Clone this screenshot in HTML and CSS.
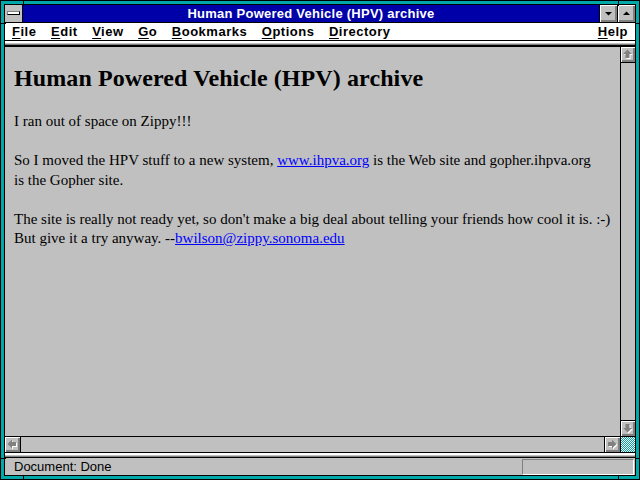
FILE: index.html
```html
<!DOCTYPE html>
<html>
<head>
<meta charset="utf-8">
<title>Human Powered Vehicle (HPV) archive</title>
<link rel="stylesheet" href="styles.css">
</head>
<body>
<div class="window">
  <div class="frame">
    <div class="titlebar">
      <div class="sysmenu"><span class="sysbar"></span></div>
      <div class="title">Human Powered Vehicle (HPV) archive</div>
      <div class="tbtn"><svg width="17" height="17" viewBox="0 0 17 17"><polygon points="5,7 12,7 8.5,10.5" fill="#000"/></svg></div>
      <div class="tbtn"><svg width="17" height="17" viewBox="0 0 17 17"><polygon points="5,10 12,10 8.5,6.5" fill="#000"/></svg></div>
    </div>
    <div class="menubar">
      <span class="mi"><u>F</u>ile</span>
      <span class="mi"><u>E</u>dit</span>
      <span class="mi"><u>V</u>iew</span>
      <span class="mi"><u>G</u>o</span>
      <span class="mi"><u>B</u>ookmarks</span>
      <span class="mi"><u>O</u>ptions</span>
      <span class="mi"><u>D</u>irectory</span>
      <span class="mi help"><u>H</u>elp</span>
    </div>
    <div class="toolstrip"></div>
    <div class="viewport">
      <div class="content">
        <h1>Human Powered Vehicle (HPV) archive</h1>
        <p>I ran out of space on Zippy!!!</p>
        <p>So I moved the HPV stuff to a new system, <a href="#">www.ihpva.org</a> is the Web site and gopher.ihpva.org<br>is the Gopher site.</p>
        <p>The site is really not ready yet, so don't make a big deal about telling your friends how cool it is. :-) But give it a try anyway. --<a href="#">bwilson@zippy.sonoma.edu</a></p>
      </div>
      <div class="vscroll">
        <div class="sbtn up"><svg width="14" height="15" viewBox="0 0 14 15"><g transform="translate(1,1)"><polygon points="6.5,2.5 2,7 4.5,7 4.5,11 8.5,11 8.5,7 11,7" fill="#fff"/></g><polygon points="6.5,2.5 2,7 4.5,7 4.5,11 8.5,11 8.5,7 11,7" fill="#808080"/></svg></div>
        <div class="track"></div>
        <div class="sbtn down"><svg width="14" height="15" viewBox="0 0 14 15"><g transform="translate(1,1)"><polygon points="6.5,11.5 2,7 4.5,7 4.5,3 8.5,3 8.5,7 11,7" fill="#fff"/></g><polygon points="6.5,11.5 2,7 4.5,7 4.5,3 8.5,3 8.5,7 11,7" fill="#808080"/></svg></div>
      </div>
    </div>
    <div class="hscroll">
      <div class="sbtn left"><svg width="15" height="15" viewBox="0 0 15 15"><g transform="translate(1,1)"><polygon points="2.5,7 7,2.5 7,5 11,5 11,9 7,9 7,11.5" fill="#fff"/></g><polygon points="2.5,7 7,2.5 7,5 11,5 11,9 7,9 7,11.5" fill="#808080"/></svg></div>
      <div class="htrack"></div>
      <div class="sbtn right"><svg width="15" height="15" viewBox="0 0 15 15"><g transform="translate(1,1)"><polygon points="11.5,7 7,2.5 7,5 3,5 3,9 7,9 7,11.5" fill="#fff"/></g><polygon points="11.5,7 7,2.5 7,5 3,5 3,9 7,9 7,11.5" fill="#808080"/></svg></div>
      <div class="corner"></div>
    </div>
    <div class="sep"></div>
    <div class="status">
      <span class="stext">Document: Done</span>
      <div class="progress"></div>
    </div>
  </div>
  <span class="mark v" style="left:22px;top:0"></span>
  <span class="mark v" style="left:617px;top:0"></span>
  <span class="mark v" style="left:22px;top:475px"></span>
  <span class="mark v" style="left:617px;top:475px"></span>
  <span class="mark h" style="left:0;top:22px"></span>
  <span class="mark h" style="left:635px;top:22px"></span>
  <span class="mark h" style="left:0;top:457px"></span>
  <span class="mark h" style="left:635px;top:457px"></span>
</div>
</body>
</html>
```
FILE: styles.css
```css
* { box-sizing: border-box; }
html, body { margin: 0; padding: 0; }
body { width: 640px; height: 480px; overflow: hidden; background: #c0c0c0; }

.window {
  position: relative;
  width: 640px;
  height: 480px;
  border: 1px solid #000;
  background: #00a8a8;
  padding: 3px;
}
.frame {
  width: 632px;
  height: 472px;
  border: 1px solid #000;
  display: flex;
  flex-direction: column;
  background: #c0c0c0;
}
.mark { position: absolute; background: #000; }
.mark.v { width: 1px; height: 5px; }
.mark.h { width: 5px; height: 1px; }

/* title bar */
.titlebar {
  height: 18px;
  display: flex;
  border-bottom: 1px solid #000;
  flex: none;
}
.sysmenu {
  width: 18px;
  height: 17px;
  background: #c0c0c0;
  border-right: 1px solid #000;
  position: relative;
}
.sysbar {
  position: absolute;
  left: 2px;
  top: 6px;
  width: 13px;
  height: 4px;
  background: #fff;
  border: 1px solid #808080;
  border-bottom-color: #000;
  border-right-color: #000;
}
.title {
  flex: 1;
  background: #0000a8;
  color: #fff;
  font: bold 13px/17px "Liberation Sans", Arial, sans-serif;
  letter-spacing: 0.25px;
  text-align: center;
}
.tbtn {
  width: 18px;
  height: 17px;
  border-left: 1px solid #000;
  background: #c0c0c0;
  box-shadow: inset 1px 1px 0 #fff, inset -2px -2px 0 #808080;
  display: flex;
}

/* menu */
.menubar {
  height: 18px;
  background: #fff;
  border-bottom: 1px solid #000;
  display: flex;
  flex: none;
  font: bold 13px/17px "Liberation Sans", Arial, sans-serif;
  letter-spacing: 0.5px;
  color: #000;
}
.mi { padding: 0 7.3px; }
.mi:first-child { padding-left: 7px; }
.mi u { text-underline-offset: 2px; }
.help { margin-left: auto; padding-right: 7px; }

.toolstrip {
  height: 6px;
  flex: none;
  border-top: 2px solid #fff;
  border-bottom: 2px solid #000;
  background: linear-gradient(#c0c0c0 0 1px, #808080 1px 2px);
}

/* viewport */
.viewport {
  height: 389px;
  display: flex;
  flex: none;
}
.content {
  flex: 1;
  padding: 17px 9px 0 9px;
  font: 15px/19.5px "Liberation Serif", "Times New Roman", serif;
  color: #000;
}
.content h1 {
  font: bold 24px/28px "Liberation Serif", "Times New Roman", serif;
  letter-spacing: 0.1px;
  margin: 0 0 20px;
}
.content p { margin: 0 0 19.5px; }
.content a { color: #0000ff; text-decoration: underline; }

.vscroll {
  width: 15px;
  border-left: 1px solid #000;
  display: flex;
  flex-direction: column;
}
.sbtn {
  background: #c0c0c0;
  box-shadow: inset 1px 1px 0 #fff, inset -2px -2px 0 #808080;
  display: flex;
  flex: none;
}
.vscroll .sbtn { height: 16px; }
.vscroll .up { border-bottom: 1px solid #000; }
.vscroll .down { border-top: 1px solid #000; }
.track { flex: 1; background: #c0c0c0; }

.hscroll {
  height: 17px;
  flex: none;
  display: flex;
  border-top: 1px solid #000;
  border-bottom: 1px solid #000;
}
.hscroll .sbtn { width: 16px; }
.hscroll .left { border-right: 1px solid #000; }
.hscroll .right { border-left: 1px solid #000; }
.htrack { flex: 1; background: #c0c0c0; }
.corner {
  width: 15px;
  border-left: 1px solid #000;
  background: repeating-conic-gradient(#00a8a8 0 25%, #fff 0 50%) 0 0 / 2px 2px;
}

.sep {
  height: 4px;
  flex: none;
  border-top: 2px solid #fff;
  background: linear-gradient(#c0c0c0 0 1px, #808080 1px 2px);
}

.status {
  flex: 1;
  border-top: 1px solid #000;
  display: flex;
  align-items: center;
  padding: 0 0 0 9px;
  font: 13px/17px "Liberation Sans", Arial, sans-serif;
  color: #000;
}
.stext { flex: 1; }
.progress {
  width: 112px;
  height: 16px;
  border-top: 1px solid #808080;
  border-left: 1px solid #808080;
  border-bottom: 1px solid #fff;
  border-right: 1px solid #fff;
  margin-right: 1px;
}
```
